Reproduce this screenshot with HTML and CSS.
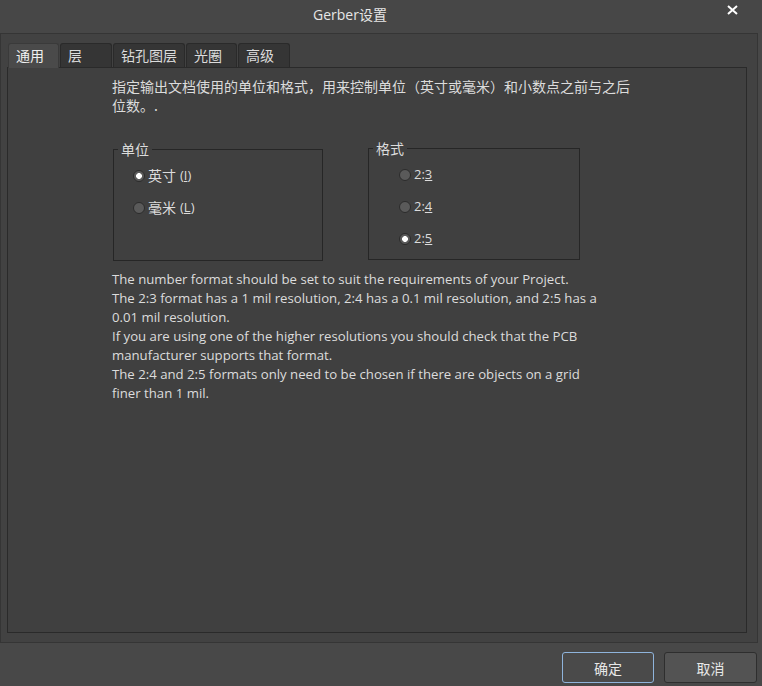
FILE: index.html
```html
<!DOCTYPE html>
<html lang="zh">
<head>
<meta charset="utf-8">
<title>Gerber设置</title>
<link rel="stylesheet" href="styles.css">
</head>
<body>
<div class="window">
  <header class="titlebar">
    <span class="title">Gerber设置</span>
    <span class="close">
      <svg width="11" height="10" viewBox="0 0 11 10"><path d="M1 1 L10 9 M10 1 L1 9" stroke="#ffffff" stroke-width="2" fill="none"/></svg>
    </span>
  </header>
  <div class="frame">
    <div class="tabs">
      <div class="tab active w1">通用</div>
      <div class="tab w2">层</div>
      <div class="tab w3">钻孔图层</div>
      <div class="tab w4">光圈</div>
      <div class="tab w5">高级</div>
    </div>
    <div class="panel">
      <p class="desc">指定输出文档使用的单位和格式，用来控制单位（英寸或毫米）和小数点之前与之后<br>位数。.</p>
      <div class="groups">
        <fieldset class="group unit">
          <legend>单位</legend>
          <div class="radios">
            <label class="radio"><span class="dot checked"></span><span class="zh">英寸</span><span class="en">(<u>I</u>)</span></label>
            <label class="radio"><span class="dot"></span><span class="zh">毫米</span><span class="en">(<u>L</u>)</span></label>
          </div>
        </fieldset>
        <fieldset class="group fmt">
          <legend>格式</legend>
          <div class="radios">
            <label class="radio"><span class="dot"></span><span class="en">2:<u>3</u></span></label>
            <label class="radio"><span class="dot"></span><span class="en">2:<u>4</u></span></label>
            <label class="radio"><span class="dot checked"></span><span class="en">2:<u>5</u></span></label>
          </div>
        </fieldset>
      </div>
      <div class="info">
        <div>The number format should be set to suit the requirements of your Project.</div>
        <div>The 2:3 format has a 1 mil resolution, 2:4 has a 0.1 mil resolution, and 2:5 has a</div>
        <div>0.01 mil resolution.</div>
        <div>If you are using one of the higher resolutions you should check that the PCB</div>
        <div>manufacturer supports that format.</div>
        <div>The 2:4 and 2:5 formats only need to be chosen if there are objects on a grid</div>
        <div>finer than 1 mil.</div>
      </div>
    </div>
  </div>
  <footer class="buttons">
    <button class="btn primary">确定</button>
    <button class="btn">取消</button>
  </footer>
</div>
</body>
</html>
```

FILE: styles.css
```css
* { box-sizing: border-box; }
html, body { margin: 0; padding: 0; }
body {
  width: 762px;
  height: 686px;
  overflow: hidden;
  background: #484848;
  font-family: "Open Sans", "Noto Sans CJK SC", sans-serif;
  color: #dcdcdc;
}
.window { width: 762px; height: 686px; display: flex; flex-direction: column; }

.titlebar {
  height: 33px;
  display: flex;
  align-items: flex-start;
  background: #474747;
}
.title {
  width: 700px;
  text-align: center;
  font-size: 14px;
  line-height: 29px;
  color: #e6e6e6;
  font-family: "Open Sans", "Noto Sans CJK SC", sans-serif;
}
.close {
  margin-left: 27px;
  margin-top: 5px;
  display: flex;
}

.frame {
  width: 758px;
  height: 610px;
  border: 1px solid #353535;
  background: #424242;
  padding: 9px 10px 9px 6px;
  display: flex;
  flex-direction: column;
}
.tabs {
  display: flex;
  gap: 1px;
  height: 24px;
  padding-left: 1px;
}
.tab {
  height: 24px;
  background: #353535;
  border: 1px solid #2a2a2a;
  border-bottom: none;
  border-radius: 3px 3px 0 0;
  font-size: 14px;
  line-height: 22px;
  padding-left: 7px;
  color: #dcdcdc;
  font-family: "Noto Sans CJK SC", sans-serif;
}
.tab.active {
  background: #4a4a4a;
  height: 25px;
  margin-bottom: -1px;
  position: relative;
  z-index: 1;
  border-color: #3a3a3a;
  color: #f0f0f0;
}
.w1 { width: 51px; }
.w2 { width: 52px; }
.w3 { width: 72px; }
.w4 { width: 51px; }
.w5 { width: 52px; }

.panel {
  flex: 1;
  border: 1px solid #2a2a2a;
  background: #404040;
  padding: 9px 0 0 104px;
}
.desc {
  margin: 0;
  font-family: "Noto Sans CJK SC", sans-serif;
  font-size: 14px;
  line-height: 19px;
  color: #dcdcdc;
}

.groups {
  display: flex;
  margin-top: 25px;
  margin-left: 1px;
  gap: 45px;
}
.group {
  margin: 0;
  padding: 0;
  min-width: 0;
  width: 210px;
  height: 121px;
  border: 1px solid #262626;
}
.group legend {
  margin-left: 4px;
  padding: 0 3px;
  font-family: "Noto Sans CJK SC", sans-serif;
  font-size: 14px;
  line-height: 19px;
  color: #dcdcdc;
}
.group.fmt { margin-top: -1px; width: 212px; }
.radios {
  display: flex;
  flex-direction: column;
  gap: 13px;
  padding-top: 7px;
}
.unit .radios { padding-left: 19px; }
.fmt .radios { padding-left: 30px; }
.radio {
  display: flex;
  align-items: center;
  height: 19px;
  line-height: 19px;
  font-size: 13px;
  color: #dcdcdc;
}
.radio .zh {
  font-family: "Noto Sans CJK SC", sans-serif;
  font-size: 14px;
  line-height: 19px;
  margin-right: 4px;
}
.radio .en { font-size: 13px; line-height: 19px; }
.dot {
  display: inline-block;
  flex-shrink: 0;
  width: 12px;
  height: 12px;
  min-width: 12px;
  border-radius: 50%;
  background: #5a5a5a;
  border: 1px solid #2c2c2c;
  margin-right: 3px;
}
.dot.checked {
  background: radial-gradient(circle, #ffffff 0, #ffffff 2.6px, #5a5a5a 3.2px);
}

.info {
  margin-top: 9px;
  font-size: 13.2px;
  line-height: 19px;
  color: #dcdcdc;
}

.buttons {
  display: flex;
  justify-content: flex-end;
  gap: 10px;
  padding: 9px 5px 0 0;
}
.btn {
  width: 93px;
  height: 31px;
  border-radius: 3px;
  border: 1px solid #2e2e2e;
  background: #535353;
  color: #e8e8e8;
  font-family: "Noto Sans CJK SC", sans-serif;
  font-size: 14px;
  padding: 0;
}
.btn.primary {
  width: 92px;
  background: #4a4a4a;
  border-color: #8fb4dc;
}
```
